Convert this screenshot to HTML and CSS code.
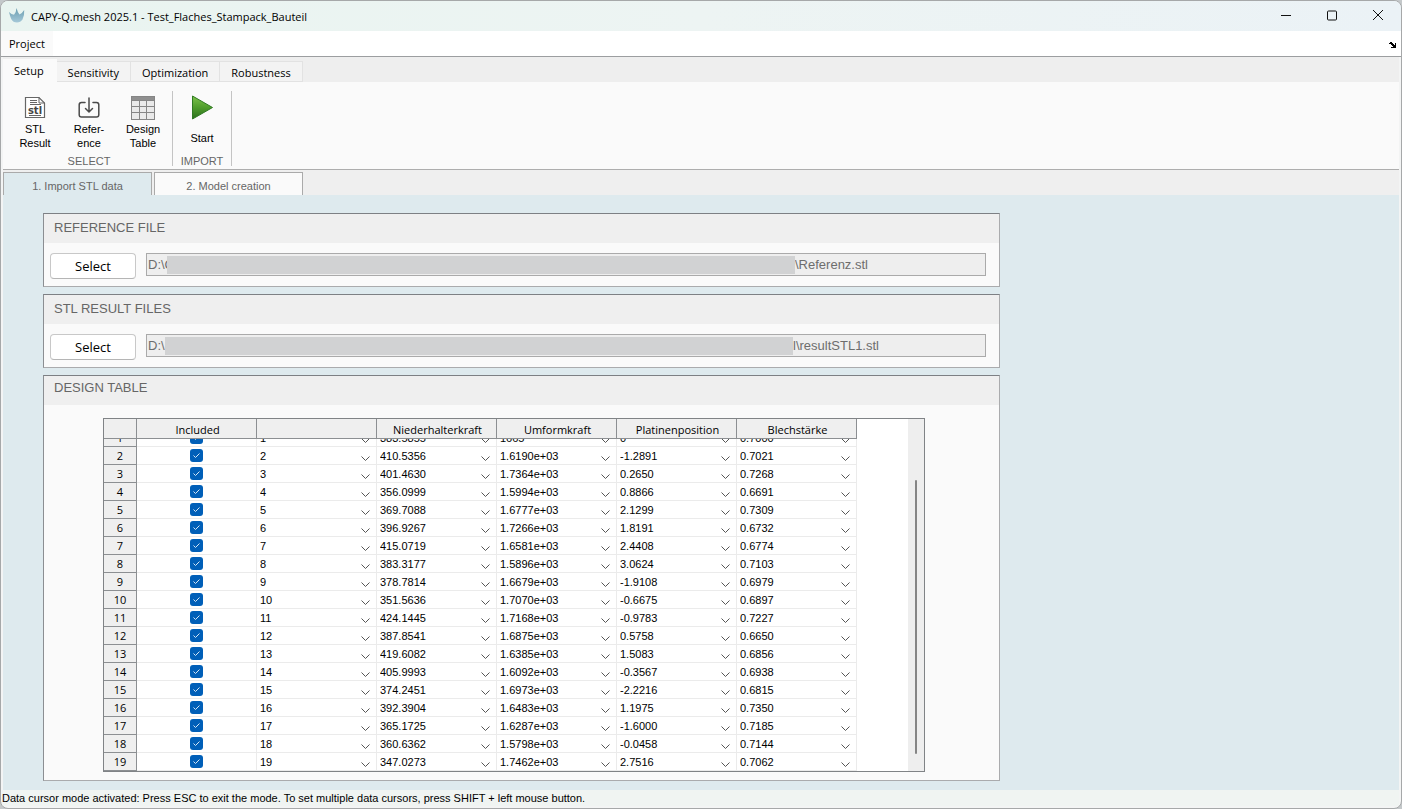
FILE: index.html
```html
<!DOCTYPE html>
<html lang="de">
<head>
<meta charset="utf-8">
<title>CAPY-Q.mesh 2025.1 - Test_Flaches_Stampack_Bauteil</title>
<link rel="stylesheet" href="styles.css">
</head>
<body>
<div class="window">
  <header class="titlebar">
    <svg class="app-icon" width="16" height="16" viewBox="0 0 16 16" aria-hidden="true">
      <defs><linearGradient id="drop" x1="0" y1="0" x2="0" y2="1"><stop offset="0" stop-color="#6a9db0"/><stop offset="1" stop-color="#a5c8d8"/></linearGradient></defs>
      <path fill="url(#drop)" d="M7.500 0 Q8.500 4 10.500 6.500 Q13 5.500 15.200 2 Q15.600 8 13.500 11.500 Q11.500 14.500 8 14.500 Q4 14.500 2.200 11 Q1 8 0 4 Q2.500 6.500 5 6.800 Q7.300 4 7.500 0Z"/>
    </svg>
    <h1 class="title">CAPY-Q.mesh 2025.1 - Test_Flaches_Stampack_Bauteil</h1>
    <div class="controls">
      <button type="button" aria-label="Minimize"><svg width="12" height="12" viewBox="0 0 12 12"><path d="M1 5.500H11"/></svg></button>
      <button type="button" aria-label="Maximize"><svg width="12" height="12" viewBox="0 0 12 12"><rect x="1.500" y="1" width="9" height="9" rx="1"/></svg></button>
      <button type="button" aria-label="Close"><svg width="12" height="12" viewBox="0 0 12 12"><path d="M1 0L11 10M11 0L1 10"/></svg></button>
    </div>
  </header>

  <nav class="menubar">
    <button type="button" class="menu">Project</button>
    <button type="button" class="dock" aria-label="Dock">
      <svg width="8" height="6" viewBox="0 0 8 6" shape-rendering="crispEdges"><path fill="#000" d="M0 1h1V0h2v1h1v1h1v1h1V1h1v5H2V5h2V4H3V3H2V2H0z"/></svg>
    </button>
  </nav>

  <div class="ribbon-tabs" role="tablist">
    <button type="button" role="tab" aria-selected="true" class="rtab active">Setup</button>
    <button type="button" role="tab" aria-selected="false" class="rtab">Sensitivity</button>
    <button type="button" role="tab" aria-selected="false" class="rtab">Optimization</button>
    <button type="button" role="tab" aria-selected="false" class="rtab">Robustness</button>
  </div>

  <div class="ribbon">
    <section class="group">
      <div class="tools">
        <button type="button" class="tool">
          <svg width="24" height="26" viewBox="0 0 24 26">
            <path fill="#fff" stroke="#666" stroke-width="1.200" d="M2.500 2.500H16L21.500 8V22.500H2.500Z"/>
            <path fill="none" stroke="#666" d="M16 2.500V8H21.500M7 5.500H14M7 7.500H14M7 9.500H18M6 20.500H18"/>
            <text x="12" y="19" text-anchor="middle" class="icon-text">stl</text>
          </svg>
          <span>STL<br>Result</span>
        </button>
        <button type="button" class="tool">
          <svg width="24" height="26" viewBox="0 0 24 26" fill="none" stroke="#4a4a4a" stroke-width="1.500" stroke-linecap="round" stroke-linejoin="round">
            <path d="M8 7.500H4.500Q2.200 7.500 2.200 9.800V19.700Q2.200 22 4.500 22H19.500Q21.800 22 21.800 19.700V9.800Q21.800 7.500 19.500 7.500H16"/>
            <path d="M12 3V16.500M8.500 13.500L12 17L15.500 13.500"/>
          </svg>
          <span>Refer-<br>ence</span>
        </button>
        <button type="button" class="tool">
          <svg width="24" height="26" viewBox="0 0 24 26" shape-rendering="crispEdges">
            <rect x="0" y="1" width="24" height="24" fill="#858585"/>
            <rect x="1" y="2" width="22" height="3" fill="#8f8f8f"/>
            <path fill="#e9e9e9" d="M1 6h7v5H1zM9 6h6v5H9zM16 6h7v5h-7zM1 12h7v5H1zM9 12h6v5H9zM16 12h7v5h-7zM1 18h7v6H1zM9 18h6v6H9zM16 18h7v6h-7z"/>
          </svg>
          <span>Design<br>Table</span>
        </button>
      </div>
      <div class="group-name">SELECT</div>
    </section>
    <section class="group import">
      <div class="tools">
        <button type="button" class="tool start">
          <svg width="24" height="26" viewBox="0 0 24 26">
            <defs><linearGradient id="go" x1="0" y1="0" x2="0" y2="1"><stop offset="0" stop-color="#7cc24a"/><stop offset=".5" stop-color="#4f9d2c"/><stop offset="1" stop-color="#2c6f1c"/></linearGradient></defs>
            <path fill="url(#go)" stroke="#2f7a22" stroke-linejoin="round" d="M2.500 1L22.500 12.500L2.500 24Z"/>
          </svg>
          <span>Start</span>
        </button>
      </div>
      <div class="group-name">IMPORT</div>
    </section>
  </div>

  <div class="steps" role="tablist">
    <button type="button" role="tab" aria-selected="true" class="step active">1. Import STL data</button>
    <button type="button" role="tab" aria-selected="false" class="step">2. Model creation</button>
  </div>

  <main class="content">
    <section class="panel">
      <h2 class="panel-title">REFERENCE FILE</h2>
      <div class="file-row">
        <button type="button" class="select-btn">Select</button>
        <div class="path">
          <input class="drive" value="D:\C" readonly aria-label="Reference drive">
          <span class="mask"></span>
          <input class="file" value="\Referenz.stl" readonly aria-label="Reference file">
        </div>
      </div>
    </section>

    <section class="panel">
      <h2 class="panel-title">STL RESULT FILES</h2>
      <div class="file-row">
        <button type="button" class="select-btn">Select</button>
        <div class="path">
          <input class="drive short" value="D:\" readonly aria-label="Result drive">
          <span class="mask"></span>
          <input class="file" value="l\resultSTL1.stl" readonly aria-label="Result file">
        </div>
      </div>
    </section>

    <section class="panel">
      <h2 class="panel-title table-title">DESIGN TABLE</h2>
      <div class="grid-frame">
        <div class="grid-scroll" id="scroller">
          <table class="grid">
            <thead>
              <tr><th class="num"></th><th>Included</th><th></th><th>Niederhalterkraft</th><th>Umformkraft</th><th>Platinenposition</th><th>Blechstärke</th></tr>
            </thead>
            <tbody id="rows"></tbody>
          </table>
        </div>
        <div class="scrollbar"><div class="thumb"></div></div>
      </div>
    </section>
  </main>

  <footer class="status">Data cursor mode activated: Press ESC to exit the mode. To set multiple data cursors, press SHIFT + left mouse button.</footer>
</div>
<script src="script.js"></script>
</body>
</html>
```

FILE: styles.css
```css
* { box-sizing: border-box; }

body {
  margin: 0;
  background: #c4c8ca;
  color: #000;
  font-family: "Liberation Sans", Arial, sans-serif;
  font-size: 11px;
}

button, input, select {
  margin: 0;
  padding: 0;
  border: 0;
  background: none;
  color: inherit;
  font: inherit;
}

.window {
  display: flex;
  flex-direction: column;
  min-height: 100vh;
  padding: 0 2px 2px;
  border: 1px solid #a6a8a9;
  border-radius: 8px;
  background: #f3f4f4;
  overflow: hidden;
}

.titlebar {
  display: flex;
  align-items: center;
  height: 30px;
  margin: 0 -2px;
  padding-left: 8px;
  background: linear-gradient(90deg, #e9f4f0, #edf4f3 50%, #ebf2f6);
}

.title {
  flex: 1;
  margin: 0 0 0 6px;
  font: 400 11px "Open Sans", "Noto Sans", sans-serif;
}

.controls { display: flex; }

.controls button {
  display: grid;
  place-items: center;
  width: 46px;
  height: 28px;
}

.controls svg { fill: none; stroke: #111; }

.menubar {
  display: flex;
  justify-content: space-between;
  height: 26px;
  margin: 0 -2px;
  border-bottom: 1px solid #9c9ea0;
  background: #fff;
}

.menu {
  padding: 0 8px;
  background: #fafafa;
  font: 11px "Open Sans", "Noto Sans", sans-serif;
}

.dock { padding: 0 4px; }

.ribbon-tabs {
  display: flex;
  align-items: flex-end;
  height: 25px;
  padding-top: 2px;
  background: #eee;
}

.rtab {
  height: 21px;
  padding: 2px 11px 0;
  border: 1px solid #e2e2e2;
  border-left: 0;
  background: #f3f3f3;
  font: 11px "Open Sans", "Noto Sans", sans-serif;
}

.rtab.active {
  height: 23px;
  padding: 0 12px 0 11px;
  border-color: #fafafa;
  background: #fafafa;
}

.ribbon {
  display: flex;
  padding: 9px 0 3px 5px;
  border-bottom: 1px solid #adadad;
  background: #fafafa;
}

.group {
  display: flex;
  flex-direction: column;
  justify-content: space-between;
  height: 75px;
  padding-right: 2px;
  border-right: 1px solid #c4c4c4;
}

.tools { display: flex; }

.tool {
  display: flex;
  flex-direction: column;
  align-items: center;
  width: 54px;
  padding-top: 4px;
  line-height: 14px;
}

.tool span { padding-top: 1px; }
.tool.start span { padding-top: 10px; }
.group.import { padding: 0 2px; }
.icon-text { font: bold 10px "DejaVu Sans", sans-serif; fill: #444; }

.group-name {
  color: #666;
  line-height: 10px;
  text-align: center;
}

.steps {
  display: flex;
  gap: 2px;
  padding-top: 2px;
  background: #efefef;
}

.step {
  width: 149px;
  height: 23px;
  padding-top: 4px;
  border: 1px solid #aaa;
  border-bottom: 0;
  background: #fafafa;
  color: #666;
}

.step.active { background: #deeaee; }

.content {
  display: flex;
  flex: 1;
  flex-direction: column;
  gap: 7px;
  padding: 18px 40px 9px;
  background: #deeaee;
}

.panel {
  max-width: 957px;
  border: 1px solid #aaabad;
  border-top-color: #7d8084;
  border-left-color: #8b8e92;
  background: #fafafa;
}

.panel-title {
  height: 29px;
  margin: 0;
  padding-left: 10px;
  background: #efefef;
  color: #666;
  font-size: 13px;
  font-weight: 400;
  line-height: 28px;
}

.table-title { line-height: 24px; }

.file-row {
  display: flex;
  align-items: flex-start;
  gap: 10px;
  padding: 10px 13px 7px 6px;
}

.select-btn {
  width: 86px;
  height: 26px;
  border: 1px solid #c8c8c8;
  border-bottom-color: #b5b5b5;
  border-radius: 4px;
  background: #fff;
  font: 13px "Open Sans", "Noto Sans", sans-serif;
}

.path {
  display: flex;
  flex: 1;
  align-items: center;
  height: 23px;
  border: 1px solid #aaa;
  background: #eee;
  color: #6d6d6d;
  font-size: 13px;
}

.drive { width: 20px; padding-left: 1px; }
.drive.short { width: 18px; }
.file { flex: 1; min-width: 0; outline: 0; }

.mask {
  flex: 0 1 628px;
  height: 18px;
  background: #d1d2d3;
}

.grid-frame {
  display: flex;
  justify-content: space-between;
  width: 822px;
  max-width: 100%;
  margin: 13px 0 8px 59px;
  border: 1px solid #808386;
  background: #fff;
}

.grid-scroll {
  height: 352px;
  overflow: hidden;
}

.grid {
  width: 753px;
  border-spacing: 0;
  table-layout: fixed;
}

.grid thead { position: sticky; top: 0; z-index: 1; }

.grid th {
  padding: 0;
  border-right: 1px solid #8c8f92;
  border-bottom: 1px solid #8c8f92;
  background: #efefef;
  font: 11px "Open Sans", "Noto Sans", sans-serif;
}

.grid thead th { height: 20px; padding: 2px 0 0 2px; line-height: 17px; }
.grid .num { width: 33px; }

.grid td {
  height: 18px;
  padding: 0;
  border-right: 1px solid #ebebeb;
  border-bottom: 1px solid #ebebeb;
}

.grid tbody th { height: 18px; padding-top: 1px; line-height: 16px; }

.check { text-align: center; }

.check input {
  appearance: none;
  display: block;
  width: 13px;
  height: 13px;
  margin: 0 auto;
  border-radius: 3px;
  background: #005fb8 url("data:image/svg+xml,%3Csvg xmlns='http://www.w3.org/2000/svg' viewBox='0 0 13 13' fill='none' stroke='%23d4e5f4'%3E%3Cpath d='M3.500 6.500L5.500 8.500L9.500 4.500'/%3E%3C/svg%3E");
}

.grid select {
  appearance: none;
  display: block;
  width: 100%;
  height: 17px;
  padding: 2px 0 0 3px;
  background: url("data:image/svg+xml,%3Csvg xmlns='http://www.w3.org/2000/svg' width='9' height='6' fill='none' stroke='%23555'%3E%3Cpath d='M.5 .5L4.500 4.500L8.500 .5'/%3E%3C/svg%3E") no-repeat right 6px top 9px;
  line-height: 15px;
}

.scrollbar {
  width: 16px;
  padding: 61px 7px 17px;
  background: #eee;
}

.thumb {
  height: 100%;
  border-radius: 1px;
  background: #858585;
}

.status {
  height: 16px;
  margin-left: -1px;
  background: #f0f4f2;
  line-height: 16px;
}
```

FILE: script.js
```javascript
const data = [
  ["383.5855", "1665", "0", "0.7000"],
  ["410.5356", "1.6190e+03", "-1.2891", "0.7021"],
  ["401.4630", "1.7364e+03", "0.2650", "0.7268"],
  ["356.0999", "1.5994e+03", "0.8866", "0.6691"],
  ["369.7088", "1.6777e+03", "2.1299", "0.7309"],
  ["396.9267", "1.7266e+03", "1.8191", "0.6732"],
  ["415.0719", "1.6581e+03", "2.4408", "0.6774"],
  ["383.3177", "1.5896e+03", "3.0624", "0.7103"],
  ["378.7814", "1.6679e+03", "-1.9108", "0.6979"],
  ["351.5636", "1.7070e+03", "-0.6675", "0.6897"],
  ["424.1445", "1.7168e+03", "-0.9783", "0.7227"],
  ["387.8541", "1.6875e+03", "0.5758", "0.6650"],
  ["419.6082", "1.6385e+03", "1.5083", "0.6856"],
  ["405.9993", "1.6092e+03", "-0.3567", "0.6938"],
  ["374.2451", "1.6973e+03", "-2.2216", "0.6815"],
  ["392.3904", "1.6483e+03", "1.1975", "0.7350"],
  ["365.1725", "1.6287e+03", "-1.6000", "0.7185"],
  ["360.6362", "1.5798e+03", "-0.0458", "0.7144"],
  ["347.0273", "1.7462e+03", "2.7516", "0.7062"]
];
const names = ["Nummer", "Niederhalterkraft", "Umformkraft", "Platinenposition", "Blechstärke"];

document.getElementById("rows").innerHTML = data.map((values, i) => {
  const n = i + 1;
  const cells = [n, ...values].map((value, c) =>
    `<td><select aria-label="${names[c]} ${n}"><option>${value}</option></select></td>`).join("");
  return `<tr><th>${n}</th><td class="check"><input type="checkbox" checked aria-label="Included ${n}"></td>${cells}</tr>`;
}).join("");

const scroller = document.getElementById("scroller");
scroller.scrollTop = scroller.scrollHeight;
```
